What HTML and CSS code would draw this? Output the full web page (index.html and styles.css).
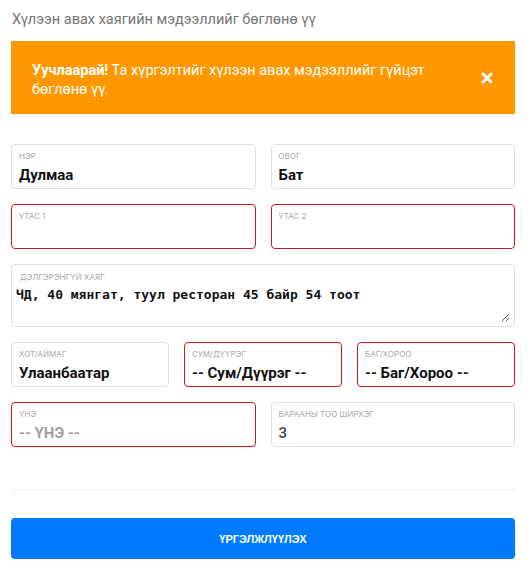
FILE: index.html
```html
<!DOCTYPE html>
<html lang="mn">
<head>
<meta charset="utf-8">
<link rel="stylesheet" href="styles.css">
</head>
<body>
<div class="page">
  <h1 class="title">Хүлээн авах хаягийн мэдээллийг бөглөнө үү</h1>
  <div class="alert">
    <p class="alert-text"><strong>Уучлаарай!</strong> Та хүргэлтийг хүлээн авах мэдээллийг гүйцэт бөглөнө үү.</p>
    <span class="alert-close"><svg width="12" height="12" viewBox="0 0 12 12"><path d="M2 2 L10 10 M10 2 L2 10" stroke="#fff" stroke-width="3" stroke-linecap="round"/></svg></span>
  </div>
  <div class="form">
    <div class="row two">
      <div class="field"><span class="label">Нэр</span><span class="value">Дулмаа</span></div>
      <div class="field"><span class="label">Овог</span><span class="value">Бат</span></div>
    </div>
    <div class="row two">
      <div class="field error"><span class="label">Утас 1</span><span class="value"></span></div>
      <div class="field error"><span class="label">Утас 2</span><span class="value"></span></div>
    </div>
    <div class="field area">
      <span class="label">Дэлгэрэнгүй хаяг</span>
      <span class="mono">ЧД, 40 мянгат, туул ресторан 45 байр 54 тоот</span>
      <svg class="grip" width="9" height="9" viewBox="0 0 9 9"><path d="M8 1 L1 8 M8 5 L5 8" stroke="#555" stroke-width="1"/></svg>
    </div>
    <div class="row three">
      <div class="field"><span class="label">Хот/Аймаг</span><span class="value">Улаанбаатар</span></div>
      <div class="field error"><span class="label">Сум/Дүүрэг</span><span class="value">-- Сум/Дүүрэг --</span></div>
      <div class="field error"><span class="label">Баг/Хороо</span><span class="value">-- Баг/Хороо --</span></div>
    </div>
    <div class="row two">
      <div class="field error"><span class="label">Үнэ</span><span class="value muted">-- ҮНЭ --</span></div>
      <div class="field"><span class="label">Барааны тоо ширхэг</span><span class="value num">3</span></div>
    </div>
  </div>
  <hr class="divider">
  <button class="submit">Үргэлжлүүлэх</button>
</div>
</body>
</html>
```

FILE: styles.css
```css
* { box-sizing: border-box; }
body {
  margin: 0;
  font-family: Roboto, "Noto Sans", sans-serif;
  background: #fff;
  color: #000;
}
.page {
  padding: 10px 17px 0 11px;
  width: 532px;
}
.title {
  margin: 0 0 11px 1px;
  font-size: 14.5px;
  line-height: 20px;
  font-weight: 400;
  color: #767676;
}
.alert {
  background: #ff9800;
  color: #fff;
  display: flex;
  align-items: center;
  justify-content: space-between;
  padding: 20px 20px 15px 21px;
  height: 73px;
}
.alert-text {
  margin: 0;
  font-size: 14.5px;
  line-height: 19px;
  width: 420px;
}
.alert-text strong { font-weight: 700; }
.alert-close {
  display: flex;
  margin-right: 2px;
  margin-top: -4px;
}
.form {
  margin-top: 30px;
  display: flex;
  flex-direction: column;
  gap: 15px;
}
.row {
  display: grid;
  gap: 15px;
}
.row.two { grid-template-columns: 1fr 1fr; }
.row.three { grid-template-columns: 1fr 1fr 1fr; }
.field {
  border: 1px solid #e0e0e0;
  border-radius: 4px;
  height: 45px;
  padding: 6px 8px 0 7px;
  display: flex;
  flex-direction: column;
  gap: 4px;
  position: relative;
}
.field.error { border-color: #d0161f; }
.label {
  font-family: Inter, Roboto, sans-serif;
  font-size: 8px;
  line-height: 10px;
  text-transform: uppercase;
  color: #a9a9a9;
}
.value {
  font-size: 15px;
  line-height: 20px;
  font-weight: 700;
  color: #111;
  min-height: 20px;
}
.value.muted { color: #9e9e9e; }
.value.num { font-weight: 500; color: #444; }
.field.area {
  height: 63px;
  padding-top: 7px;
  gap: 3px;
}
.field.area .label { margin-left: 1px; }
.mono {
  font-family: "DejaVu Sans Mono", "Liberation Mono", monospace;
  font-size: 13px;
  line-height: 20px;
  font-weight: 700;
  color: #111;
  margin-left: -3px;
}
.grip {
  position: absolute;
  right: 4px;
  bottom: 4px;
}
.divider {
  border: 0;
  border-top: 1px solid #f0f0f0;
  margin: 42px 0 0 0;
}
.submit {
  display: block;
  width: 100%;
  margin-top: 28px;
  height: 41px;
  border: 0;
  border-radius: 4px;
  background: #007bff;
  color: #fff;
  font-family: "Liberation Sans", Arial, sans-serif;
  font-weight: 700;
  font-size: 11px;
  text-transform: uppercase;
}
```
